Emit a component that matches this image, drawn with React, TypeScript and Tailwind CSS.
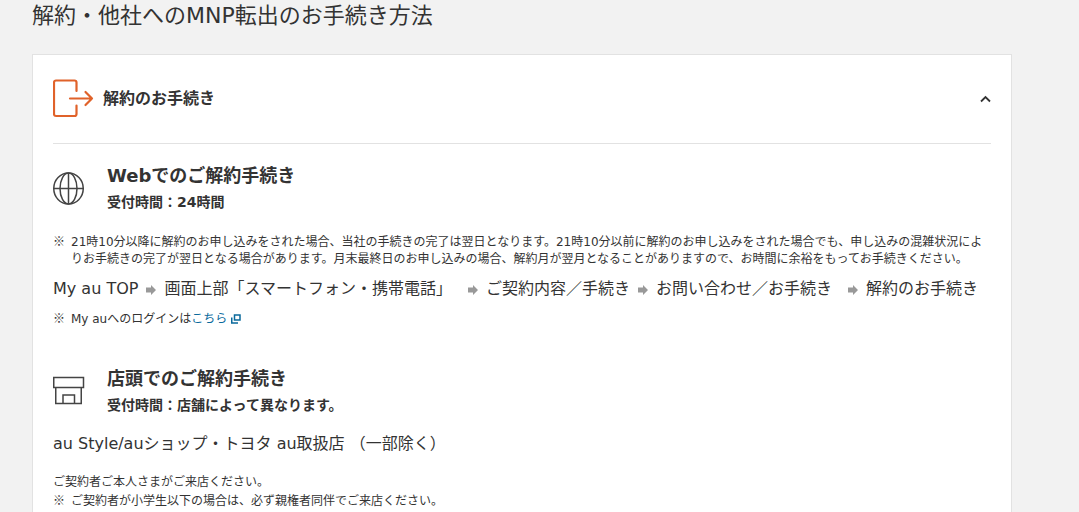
import type { ReactNode } from "react";

const steps = [
  { label: "My au TOP", wide: false },
  { label: "画面上部「スマートフォン・携帯電話」", wide: true },
  { label: "ご契約内容／手続き", wide: false },
  { label: "お問い合わせ／お手続き", wide: true },
  { label: "解約のお手続き", wide: false },
];

function ExitIcon() {
  return (
    <svg width="42" height="40" viewBox="0 0 42 40" fill="none" stroke="#e0622a" strokeWidth="2.2" strokeLinecap="round" strokeLinejoin="round" aria-hidden="true">
      <path d="M23.500 12V3.500a2 2 0 0 0-2-2H3a2 2 0 0 0-2 2V35a2 2 0 0 0 2 2h18.500a2 2 0 0 0 2-2v-8.500" />
      <path d="M17 19.500h22M32.500 13 39 19.500l-6.500 6.500" />
    </svg>
  );
}

function GlobeIcon() {
  return (
    <svg width="32" height="34" viewBox="0 0 32 34" fill="none" stroke="#444" strokeWidth="1.500" aria-hidden="true">
      <ellipse cx="15.500" cy="17.500" rx="14.750" ry="15.500" />
      <ellipse cx="15.500" cy="17.500" rx="8.500" ry="15.500" />
      <path d="M15.500 2v31M1 17.500h29.500" />
    </svg>
  );
}

function StoreIcon() {
  return (
    <svg width="32" height="30" viewBox="0 0 32 30" fill="none" stroke="#444" strokeWidth="1.500" aria-hidden="true">
      <path d="M.750 1.500h29.750v10H.750zM2.750 11.500v16h25.500v-16M10 27.500v-8.500h11.500v8.500" />
    </svg>
  );
}

function StepArrow() {
  return (
    <svg className="mx-2 mt-0.5 shrink-0" width="10" height="10" viewBox="0 0 10 10" fill="#999" aria-hidden="true">
      <path d="M0 2.500h5V0l5 5-5 5V7.500H0z" />
    </svg>
  );
}

function WindowIcon() {
  return (
    <svg className="ml-1 inline-block align-[-1px]" width="10" height="10" viewBox="0 0 10 10" fill="none" stroke="#0a6a9c" aria-hidden="true">
      <path d="M3.500 1h5.500v5H3.500z" strokeWidth="1.500" />
      <path d="M.750 3.500v5.500H7" strokeWidth="1.500" />
    </svg>
  );
}

function Note({ children }: { children: ReactNode }) {
  return (
    <p className="flex items-baseline pr-1 text-xs leading-[17px]">
      <span className="w-[18px] shrink-0 font-['Noto_Sans_CJK_JP',sans-serif]">※</span>
      <span>{children}</span>
    </p>
  );
}

function MethodHeading({ icon, title, hours }: { icon: ReactNode; title: string; hours: string }) {
  return (
    <div className="flex items-center gap-[22px]">
      {icon}
      <div className="font-bold">
        <h3 className="text-lg leading-7">{title}</h3>
        <p className="text-sm leading-6">{hours}</p>
      </div>
    </div>
  );
}

export default function App() {
  return (
    <main className="min-h-screen bg-[#f2f2f2] pr-[67px] pl-8 font-['DejaVu_Sans','Noto_Sans_CJK_JP',sans-serif] text-[#333]">
      <h1 className="text-[22px] leading-8">解約・他社へのMNP転出のお手続き方法</h1>

      <section className="mt-[22px] border border-[#e2e2e2] bg-white px-5 pb-8">
        <h2 className="border-b border-[#e2e2e2]">
          <button type="button" aria-expanded="true" className="flex h-[88px] w-full items-center gap-2 text-left font-bold">
            <ExitIcon />
            <span>解約のお手続き</span>
            <svg className="ml-auto" width="12" height="8" viewBox="0 0 12 8" fill="none" stroke="#333" strokeWidth="1.800" aria-hidden="true">
              <path d="M2 6.500 6.500 2 11 6.500" />
            </svg>
          </button>
        </h2>

        <div className="pt-[18px]">
          <MethodHeading icon={<GlobeIcon />} title="Webでのご解約手続き" hours="受付時間：24時間" />
          <div className="pt-[18px]">
            <Note>
              21時10分以降に解約のお申し込みをされた場合、当社の手続きの完了は翌日となります。21時10分以前に解約のお申し込みをされた場合でも、申し込みの混雑状況によりお手続きの完了が翌日となる場合があります。月末最終日のお申し込みの場合、解約月が翌月となることがありますので、お時間に余裕をもってお手続きください。
            </Note>
          </div>
          <ol className="flex flex-wrap items-center pt-[7px] leading-7">
            {steps.map((step, i) => (
              <li key={step.label} className={step.wide ? "flex items-center pr-2" : "flex items-center"}>
                {i > 0 && <StepArrow />}
                {step.label}
              </li>
            ))}
          </ol>
          <div className="pt-1.5">
            <Note>
              My auへのログインは
              <a href="#login" className="text-[#0a6a9c]">
                こちら
                <WindowIcon />
              </a>
            </Note>
          </div>
        </div>

        <div className="pt-[37px]">
          <MethodHeading icon={<StoreIcon />} title="店頭でのご解約手続き" hours="受付時間：店舗によって異なります。" />
          <p className="pt-[13px] leading-7">au Style/auショップ・トヨタ au取扱店 （一部除く）</p>
          <p className="pt-4 text-xs leading-[17px]">ご契約者ご本人さまがご来店ください。</p>
          <Note>ご契約者が小学生以下の場合は、必ず親権者同伴でご来店ください。</Note>
        </div>
      </section>
    </main>
  );
}
